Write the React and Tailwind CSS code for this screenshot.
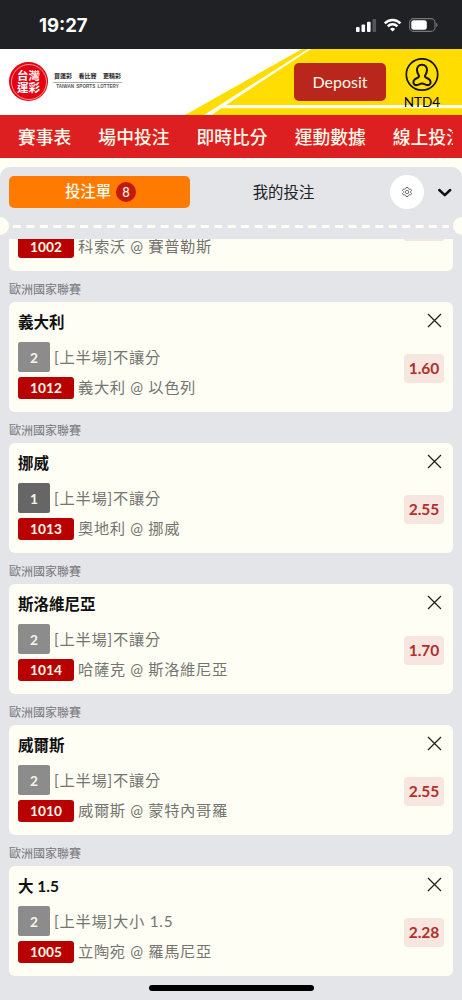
const bets = [
  { pick: '義大利', side: '2', market: '[上半場]不讓分', code: '1012', match: '義大利 @ 以色列', odds: '1.60' },
  { pick: '挪威', side: '1', market: '[上半場]不讓分', code: '1013', match: '奧地利 @ 挪威', odds: '2.55', dark: true },
  { pick: '斯洛維尼亞', side: '2', market: '[上半場]不讓分', code: '1014', match: '哈薩克 @ 斯洛維尼亞', odds: '1.70' },
  { pick: '威爾斯', side: '2', market: '[上半場]不讓分', code: '1010', match: '威爾斯 @ 蒙特內哥羅', odds: '2.55' },
  { pick: '大 1.5', side: '2', market: '[上半場]大小 1.5', code: '1005', match: '立陶宛 @ 羅馬尼亞', odds: '2.28' },
];

const navItems = ['賽事表', '場中投注', '即時比分', '運動數據', '線上投注'];

function StatusBar() {
  return (
    <div className="flex h-[49px] shrink-0 items-center justify-between bg-[#202125] pr-[23px] pl-[39px] text-white">
      <span className="mt-px font-['Inter',sans-serif] text-[18.5px] font-bold leading-none">19:27</span>
      <svg width="84" height="16" viewBox="0 0 84 16" className="mt-px block">
        <rect x="1" y="10" width="3.6" height="5" rx="1" fill="#fff" />
        <rect x="6.5" y="7.5" width="3.6" height="7.5" rx="1" fill="#fff" />
        <rect x="12" y="4.8" width="3.6" height="10.2" rx="1" fill="#fff" />
        <rect x="17.5" y="2" width="3.6" height="13" rx="1" fill="#55565a" />
        <g fill="none" stroke="#fff" strokeWidth="2.5">
          <path d="M29.8 6.3a10.6 10.6 0 0 1 15.6 0" />
          <path d="M32.8 9.4a6.7 6.7 0 0 1 9.6 0" />
        </g>
        <path d="M37.6 14.6l-2.6-2.7a3.8 3.8 0 0 1 5.2 0z" fill="#fff" />
        <rect x="54.6" y="1.6" width="25.4" height="12.8" rx="4" fill="none" stroke="#77787b" strokeWidth="1.1" />
        <rect x="56.3" y="3.2" width="15.5" height="9.6" rx="2.4" fill="#fff" />
        <path d="M81.2 5.8c1.7.5 1.7 3.9 0 4.4z" fill="#77787b" />
      </svg>
    </div>
  );
}

function Header() {
  return (
    <header className="relative flex h-[66px] shrink-0 items-start bg-white pl-[9px]">
      <svg className="absolute inset-0" width="462" height="66" viewBox="0 0 462 66">
        <path d="M302 0H462V66H185Z" fill="#ffdd00" />
        <path d="M308 0H311L226 56H462V59.2H221L212 66H204Z" fill="#fffef2" />
      </svg>
      <div className="relative mt-[13px] flex size-[39px] items-center justify-center rounded-full bg-[#e60012]">
        <div className="flex size-[36px] flex-col items-center justify-center whitespace-nowrap rounded-full border border-[#f59a9a] text-[11.5px] font-bold leading-[12px] text-white">
          <span className="h-[12px]">台灣</span>
          <span className="h-[12px]">運彩</span>
        </div>
      </div>
      <div className="relative mt-[22px] ml-[5px] flex w-[69px] flex-col items-center whitespace-nowrap text-[#222]">
        <div className="flex h-[11px] w-full justify-between px-[1px] text-[6px] font-bold leading-[10px]">
          <span>買運彩</span>
          <span>看比賽</span>
          <span>更精彩</span>
        </div>
        <div className="h-px w-full bg-[#aaa]" />
        <div className="mt-[1px] font-['Liberation_Sans',sans-serif] text-[4.6px] font-bold leading-[6px] text-[#555] [word-spacing:1px]">TAIWAN SPORTS LOTTERY</div>
      </div>
      <button className="relative mt-[14px] ml-[172px] h-[38px] w-[92px] rounded-[5px] bg-[#b9261b] text-[16px] leading-none text-[#fffbea]">Deposit</button>
      <div className="relative mt-[9px] ml-[14px] flex w-[44px] flex-col items-center text-black">
        <svg width="34" height="34" viewBox="0 0 34 34" fill="none" stroke="#15130a">
          <circle cx="17" cy="16.5" r="15.7" strokeWidth="1.7" />
          <path d="M17 6.8c-3.5 0-5.1 2.3-5 5.3.1 2.6 1.1 4 1.8 5.2.5 1 .2 2-1.1 2.5-2.4.9-4.2 2.2-4.3 4.5 0 1.9 1.5 3 3.4 2.8 2.2-.2 2.7-1.5 5.2-1.5s3 1.3 5.2 1.5c1.9.2 3.4-.9 3.4-2.8-.1-2.3-1.9-3.6-4.3-4.5-1.3-.5-1.6-1.5-1.1-2.5.7-1.2 1.7-2.6 1.8-5.2.1-3-1.5-5.3-5-5.3z" strokeWidth="2" />
        </svg>
        <span className="mt-[2px] text-[13.5px] leading-[16px]">NTD4</span>
      </div>
    </header>
  );
}

function SlipHeader() {
  return (
    <div className="relative z-10 h-[72px] shrink-0">
      <div className="flex h-[50px] items-center pl-[9px]">
        <div className="flex h-[32px] w-[181px] items-center justify-center gap-[5px] rounded-[5px] bg-[#ff7a00] pl-[2px] text-[15.4px] text-[#fffbea]">
          <span className="font-medium">投注單</span>
          <span className="flex size-5 items-center justify-center rounded-full bg-[#c5190f] text-[13px] font-medium leading-none">8</span>
        </div>
        <div className="w-[187px] pt-px text-center text-[15.4px] text-[#202125]">我的投注</div>
        <div className="ml-[13px] flex size-[34px] items-center justify-center rounded-full bg-white">
          <svg width="10" height="10" viewBox="0 0 20 20" fill="none" stroke="#555" strokeWidth="1.6">
            <path d="M8 1h4l.7 2.5 1.8 1 2.5-.8 2 3.5L17 9v2l2 1.8-2 3.5-2.5-.8-1.8 1L12 19H8l-.7-2.5-1.8-1-2.5.8-2-3.5L3 11V9L1 7.2l2-3.5 2.5.8 1.8-1z" />
            <circle cx="10" cy="10" r="3.4" />
          </svg>
        </div>
        <svg className="ml-[13px]" width="16" height="12" viewBox="0 0 16 12" fill="none" stroke="#111" strokeWidth="2.5" strokeLinecap="round" strokeLinejoin="round">
          <path d="M2.3 4L7.8 9.2L13.2 4" />
        </svg>
      </div>
      <div className="flex h-[18px] items-center justify-between">
        <span className="h-[18px] w-[9px] shrink-0 rounded-r-full bg-[#fffef5]" />
        <svg width="444" height="3" viewBox="0 0 444 3" className="min-w-0">
          <path d="M4 1.5H440" stroke="#fffef5" strokeWidth="3" strokeDasharray="8 5.42" />
        </svg>
        <span className="h-[18px] w-[9px] shrink-0 rounded-l-full bg-[#fffef5]" />
      </div>
    </div>
  );
}

function MatchRow({ code, match }) {
  return (
    <div className="flex h-[22px] items-center gap-1">
      <span className="flex h-[22px] w-[56px] items-center justify-center rounded-[3px] bg-[#b80000] text-[13.7px] font-bold leading-none text-[#fffbea]">{code}</span>
      <span className="pb-[2px] text-[15.3px] leading-[20px] tracking-[0.62px] text-[#757570]">{match}</span>
    </div>
  );
}

function BetCard({ bet }) {
  return (
    <section className="h-[141px] shrink-0">
      <h3 className="h-[31px] pt-[10px] text-[12px] leading-[18px] text-[#75757a]">歐洲國家聯賽</h3>
      <div className="flex h-[110px] justify-between rounded-[6px] bg-[#fffef5] pl-[9px] pr-[9px]">
        <div className="whitespace-nowrap">
          <div className="h-[40px] pt-[10px] text-[15.5px] font-bold leading-[20px] text-[#111]">{bet.pick}</div>
          <div className="mb-[5px] flex h-[30px] items-center gap-1">
            <span className={'flex h-[30px] w-[32px] items-center justify-center rounded-[2px] pt-px text-[13.7px] font-bold leading-none text-[#f6f5ec] ' + (bet.dark ? 'bg-[#666666]' : 'bg-[#8c8c8c]')}>{bet.side}</span>
            <span className="text-[15.3px] leading-[30px] tracking-[0.74px] text-[#757570]">{bet.market}</span>
          </div>
          <MatchRow code={bet.code} match={bet.match} />
        </div>
        <div className="flex flex-col items-end">
          <svg className="mt-[11px] mr-[2px]" width="15" height="15" viewBox="0 0 15 15" stroke="#22211d" strokeWidth="1.3">
            <path d="M1 1L14 14M14 1L1 14" />
          </svg>
          <span className="mt-[26px] flex h-[29px] w-[40px] items-center justify-center rounded-[4px] bg-[#f7e5df] text-[15.5px] font-bold leading-none text-[#b0302a]">{bet.odds}</span>
        </div>
      </div>
    </section>
  );
}

export default function App() {
  return (
    <div className="flex h-[1000px] w-[462px] flex-col overflow-hidden bg-[#fffef5] font-['Lato','Noto_Sans_CJK_TC',sans-serif]">
      <StatusBar />
      <Header />
      <nav className="h-[43px] shrink-0 bg-[#de1f21] px-[9px]">
        <div className="flex h-full items-center gap-[27px] overflow-hidden whitespace-nowrap pl-[9px] pt-px text-[17.8px] font-medium text-[#fffbea]">
          {navItems.map((item) => (
            <span key={item} className="shrink-0">{item}</span>
          ))}
        </div>
      </nav>
      <main className="mt-[9px] flex min-h-0 flex-1 flex-col rounded-t-[10px] bg-[#e4e5e8]">
        <SlipHeader />
        <div className="flex min-h-0 flex-1 flex-col overflow-hidden px-[9px]">
          <div className="flex h-[32px] shrink-0 items-start justify-between overflow-hidden rounded-b-[6px] bg-[#fffef5] px-[9px]">
            <div className="-mt-[3px]">
              <MatchRow code="1002" match="科索沃 @ 賽普勒斯" />
            </div>
            <span className="h-[2px] w-[40px] rounded-b-[4px] bg-[#f7e5df]" />
          </div>
          {bets.map((bet) => (
            <BetCard key={bet.code} bet={bet} />
          ))}
          <div className="mx-auto mt-[9px] h-[6px] w-[165px] shrink-0 rounded-full bg-black" />
        </div>
      </main>
    </div>
  );
}
